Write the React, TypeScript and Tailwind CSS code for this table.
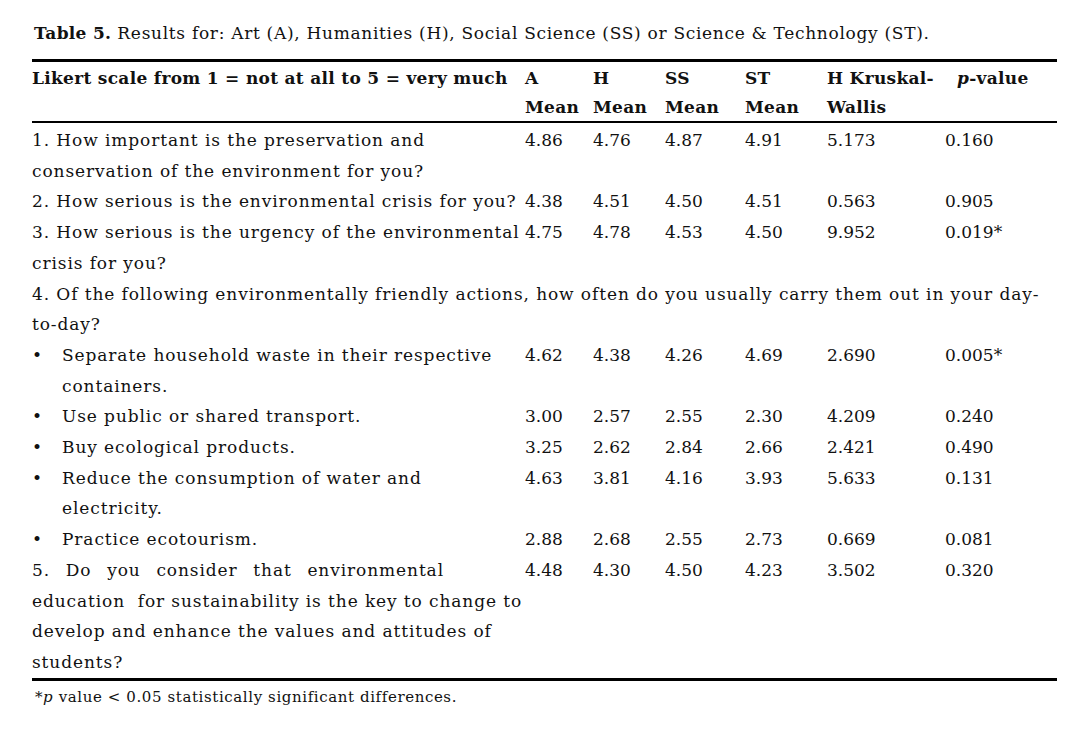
const serif = "font-['DejaVu_Serif',serif]";

type Row = {
  lines: string[];
  vals: string[];
  bullet?: boolean;
  justifyFirst?: boolean;
};

const cols = 'grid grid-cols-[493px_68px_72px_80px_82px_118px_112px]';

const rows: Row[] = [
  {
    lines: ['1. How important is the preservation and', 'conservation of the environment for you?'],
    vals: ['4.86', '4.76', '4.87', '4.91', '5.173', '0.160'],
  },
  {
    lines: ['2. How serious is the environmental crisis for you?'],
    vals: ['4.38', '4.51', '4.50', '4.51', '0.563', '0.905'],
  },
  {
    lines: ['3. How serious is the urgency of the environmental', 'crisis for you?'],
    vals: ['4.75', '4.78', '4.53', '4.50', '9.952', '0.019*'],
  },
];

const bullets: Row[] = [
  {
    lines: ['Separate household waste in their respective', 'containers.'],
    vals: ['4.62', '4.38', '4.26', '4.69', '2.690', '0.005*'],
    bullet: true,
  },
  { lines: ['Use public or shared transport.'], vals: ['3.00', '2.57', '2.55', '2.30', '4.209', '0.240'], bullet: true },
  { lines: ['Buy ecological products.'], vals: ['3.25', '2.62', '2.84', '2.66', '2.421', '0.490'], bullet: true },
  {
    lines: ['Reduce the consumption of water and', 'electricity.'],
    vals: ['4.63', '3.81', '4.16', '3.93', '5.633', '0.131'],
    bullet: true,
  },
  { lines: ['Practice ecotourism.'], vals: ['2.88', '2.68', '2.55', '2.73', '0.669', '0.081'], bullet: true },
];

const last: Row = {
  lines: [
    '5. Do you consider that environmental',
    'education  for sustainability is the key to change to',
    'develop and enhance the values and attitudes of',
    'students?',
  ],
  vals: ['4.48', '4.30', '4.50', '4.23', '3.502', '0.320'],
  justifyFirst: true,
};

function DataRow({ row }: { row: Row }) {
  return (
    <div className={cols}>
      <div className={row.bullet ? 'flex' : ''}>
        {row.bullet && <span className="w-[30px] shrink-0 tracking-normal">•</span>}
        <div>
          {row.lines.map((l, i) => (
            <div
              key={i}
              className={
                row.justifyFirst && i === 0
                  ? 'w-[412px] text-justify [text-align-last:justify]'
                  : 'whitespace-pre'
              }
            >
              {l}
            </div>
          ))}
        </div>
      </div>
      {/* numbers are tighter than the prose */}
      {row.vals.map((v, i) => (
        <div key={i} className="whitespace-nowrap tracking-normal">
          {v}
        </div>
      ))}
    </div>
  );
}

export default function App() {
  return (
    <div className={`${serif} bg-white text-[#111] w-[1087px] h-[729px] pl-[32px] pt-[21px]`}>
      <div className="text-[17px] leading-[24px] tracking-[0.7px] pl-[2px] mb-[14px] whitespace-nowrap">
        <span className="font-bold tracking-[0.3px]">Table 5.</span> Results for: Art (A), Humanities (H), Social
        Science (SS) or Science &amp; Technology (ST).
      </div>
      <div className="w-[1025px]">
        <div className="border-t-[3px] border-black" />
        <div className={`${cols} font-bold text-[17px] leading-[28.5px] tracking-[0.3px] pt-[2px]`}>
          <div className="whitespace-nowrap">Likert scale from 1 = not at all to 5 = very much</div>
          <div>
            A<br />Mean
          </div>
          <div>
            H<br />Mean
          </div>
          <div>
            SS<br />Mean
          </div>
          <div>
            ST<br />Mean
          </div>
          <div className="whitespace-nowrap">
            H Kruskal-<br />Wallis
          </div>
          <div className="pl-[12px]">
            <span className="italic">p</span>-value
          </div>
        </div>
        <div className="border-t-[2px] border-black" />
        <div className="text-[17px] leading-[30.7px] tracking-[0.9px] pt-[2px]">
          {rows.map((r, i) => (
            <DataRow key={i} row={r} />
          ))}
          <div className="whitespace-pre">
            4. Of the following environmentally friendly actions, how often do you usually carry them out in your day-
            <br />
            to-day?
          </div>
          {bullets.map((r, i) => (
            <DataRow key={i} row={r} />
          ))}
          <DataRow row={last} />
        </div>
        <div className="border-t-[3px] border-black" />
        <div className="text-[15px] leading-[22px] tracking-[0.6px] mt-[5px] pl-[3px]">
          *<span className="italic">p</span> value &lt; 0.05 statistically significant differences.
        </div>
      </div>
    </div>
  );
}
